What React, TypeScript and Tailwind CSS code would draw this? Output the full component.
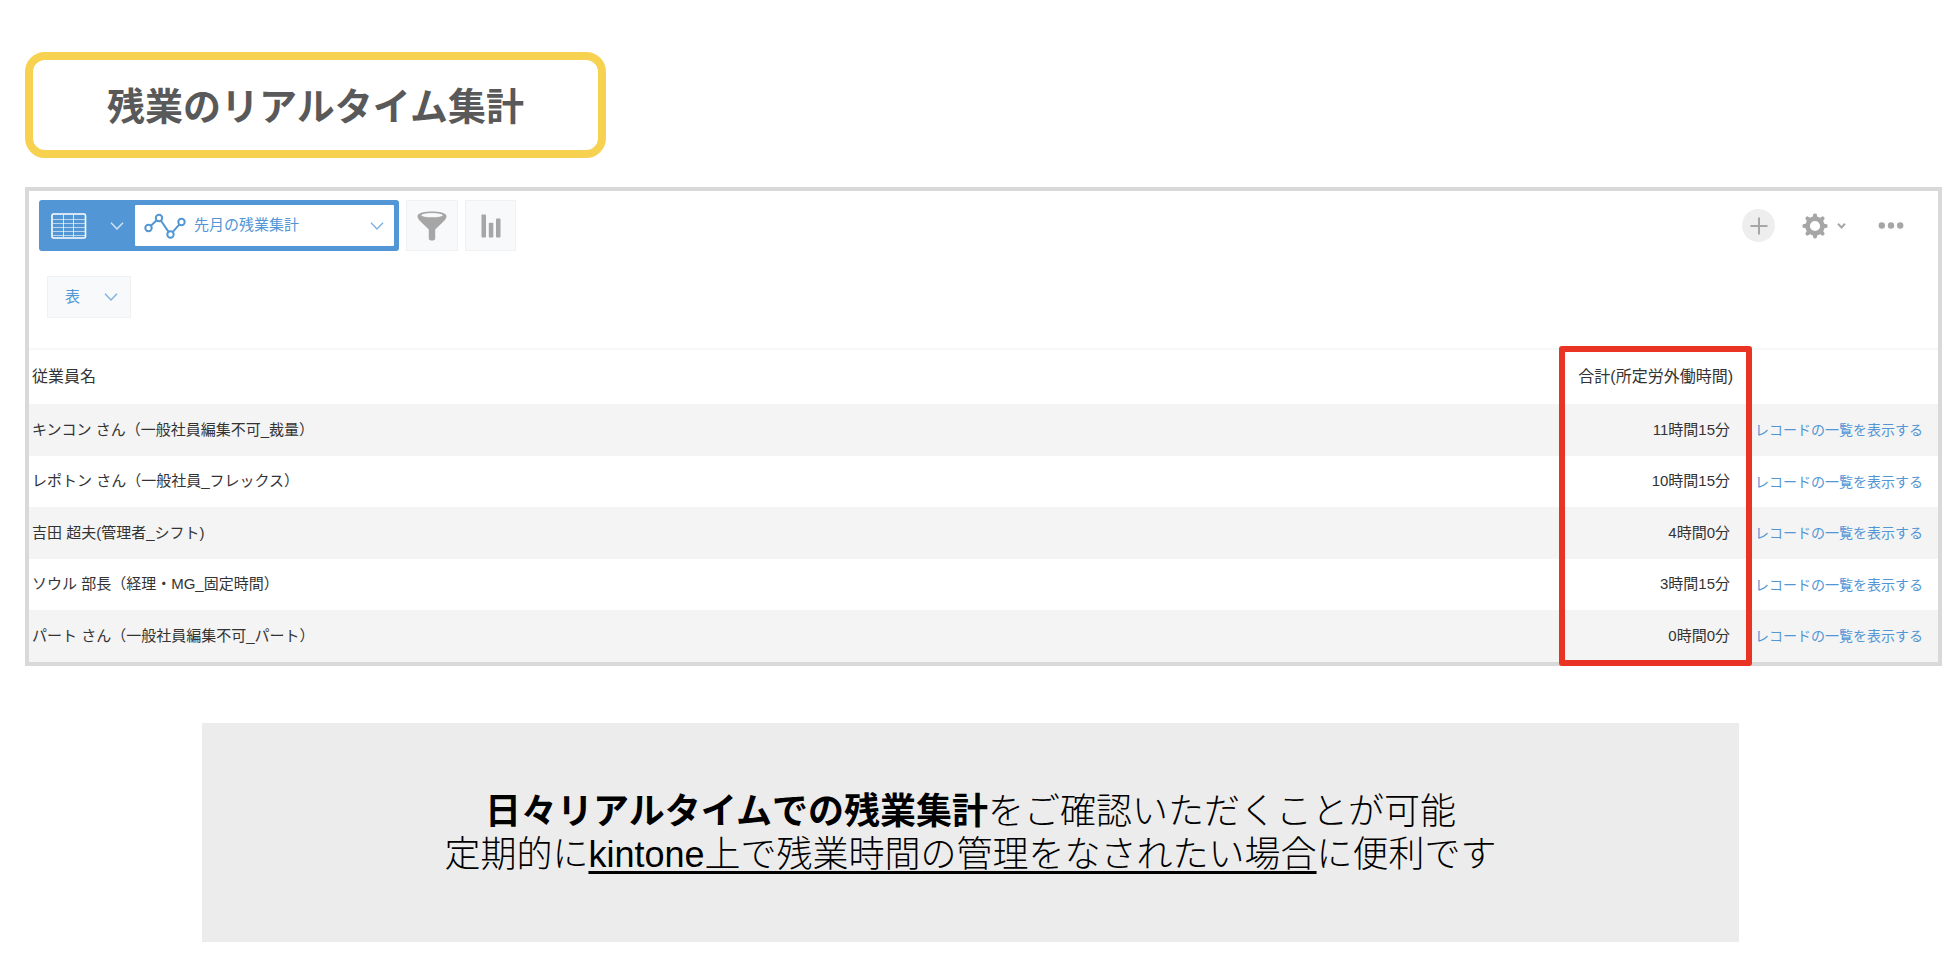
import React, { useState } from 'react';

interface OvertimeRow {
  name: string;
  total: string;
}

const ROWS: OvertimeRow[] = [
  { name: 'キンコン さん（一般社員編集不可_裁量）', total: '11時間15分' },
  { name: 'レポトン さん（一般社員_フレックス）', total: '10時間15分' },
  { name: '吉田 超夫(管理者_シフト)', total: '4時間0分' },
  { name: 'ソウル 部長（経理・MG_固定時間）', total: '3時間15分' },
  { name: 'パート さん（一般社員編集不可_パート）', total: '0時間0分' },
];

const Chevron: React.FC<{ className?: string }> = ({ className }) => (
  <svg className={`h-2 w-3.5 ${className ?? ''}`} viewBox="0 0 14 8" fill="none" stroke="currentColor" strokeWidth="1.4" aria-hidden="true">
    <path d="M1 0.7L7 7L13 0.7" />
  </svg>
);

const GridIcon = () => (
  <svg className="h-[26px] w-9" viewBox="0 0 36 26" fill="none" stroke="#fff" aria-hidden="true">
    <rect x="1" y="1" width="33.5" height="24" rx="1.5" strokeWidth="1.6" />
    <path d="M12.5 2V24M22.5 2V24" strokeWidth="1" opacity="0.75" />
    <path d="M2 6.5H34M2 10.5H34M2 14.5H34M2 18.5H34M2 22.5H34" strokeWidth="1" opacity="0.6" />
  </svg>
);

const LineChartIcon = () => (
  <svg className="h-[26px] w-[42px]" viewBox="0 0 42 26" fill="none" stroke="#5296d5" strokeWidth="2" aria-hidden="true">
    <circle cx="4.5" cy="15" r="3.2" />
    <circle cx="15" cy="5" r="3.2" />
    <circle cx="26.5" cy="21.5" r="3.2" />
    <circle cx="37.5" cy="9" r="3.2" />
    <path d="M6.8 12.7L12.7 7.3M17 7.8L24.6 18.9M28.6 19.1L35.4 11.4" />
  </svg>
);

const FunnelIcon = () => (
  <svg className="h-[30px] w-[30px]" viewBox="0 0 30 30" aria-hidden="true">
    <path
      d="M15 0.5C22 0.5 29.5 1.8 29.5 5.2C29.5 7.5 27.5 9.5 25.5 11.5L18.2 18.5V27.5C18.2 29 17 29.5 15 29.5C13 29.5 11.8 29 11.8 27.5V18.5L4.5 11.5C2.5 9.5 0.5 7.5 0.5 5.2C0.5 1.8 8 0.5 15 0.5Z"
      fill="#a6a6a6"
    />
    <ellipse cx="15" cy="4.2" rx="10.8" ry="2.1" fill="#f7f9fa" />
  </svg>
);

const BarsIcon = () => (
  <svg className="h-6 w-5" viewBox="0 0 20 24" fill="#a6a6a6" aria-hidden="true">
    <rect x="0.5" y="0.5" width="4.5" height="23" rx="0.8" />
    <rect x="7.8" y="8.8" width="4.5" height="14.7" rx="0.8" />
    <rect x="15" y="4.5" width="4.5" height="19" rx="0.8" />
  </svg>
);

const TEETH = [0, 45, 90, 135, 180, 225, 270, 315];

const GearIcon = () => (
  <svg className="h-[26px] w-[26px]" viewBox="0 0 26 26" fill="#a6a6a6" aria-hidden="true">
    <circle cx="13" cy="13" r="7.4" fill="none" stroke="#a6a6a6" strokeWidth="4.6" />
    {TEETH.map(deg => (
      <path key={deg} d="M10.6 4.5L11.3 1.2Q11.5 0.4 13 0.4Q14.5 0.4 14.7 1.2L15.4 4.5Z" transform={`rotate(${deg} 13 13)`} />
    ))}
  </svg>
);

const Toolbar: React.FC = () => {
  const [view, setView] = useState('先月の残業集計');

  return (
    <div className="flex items-center justify-between pr-[34px] pl-2.5">
      <div className="flex gap-[7px]">
        <div className="flex h-[51px] w-[360px] items-stretch rounded-[3px] bg-[#5296d5] py-[5px] pr-[5px]">
          <button type="button" aria-label="表示形式" className="flex w-24 shrink-0 items-center gap-[23px] pl-3 text-[#d3e5f5]">
            <GridIcon />
            <Chevron />
          </button>
          <label className="relative flex flex-1 items-center gap-2 rounded-[1px] bg-white pl-[9px]">
            <LineChartIcon />
            <select
              aria-label="グラフ"
              value={view}
              onChange={e => setView(e.target.value)}
              className="h-full flex-1 appearance-none bg-transparent text-[15px] text-[#5296d5] outline-none"
            >
              <option>先月の残業集計</option>
            </select>
            <Chevron className="pointer-events-none absolute right-2.5 text-[#7fb2e0]" />
          </label>
        </div>
        <button type="button" aria-label="絞り込む" className="flex w-[52px] items-center justify-center border border-[#f0f1f2] bg-[#f7f9fa]">
          <FunnelIcon />
        </button>
        <button type="button" aria-label="グラフを作成" className="flex w-[51px] items-center justify-center border border-[#f0f1f2] bg-[#f7f9fa]">
          <BarsIcon />
        </button>
      </div>

      <div className="flex items-center text-[#a6a6a6]">
        <button type="button" aria-label="追加" className="flex size-[33px] items-center justify-center rounded-full bg-[#eee]">
          <svg className="size-[18px]" viewBox="0 0 18 18" stroke="currentColor" strokeWidth="2" aria-hidden="true">
            <path d="M9 0.5V17.5M0.5 9H17.5" />
          </svg>
        </button>
        <button type="button" aria-label="設定" className="ml-[27px] flex items-center gap-[9px]">
          <GearIcon />
          <svg className="h-1.5 w-[9px]" viewBox="0 0 9 6" fill="none" stroke="currentColor" strokeWidth="2" aria-hidden="true">
            <path d="M1 0.8L4.5 4.5L8 0.8" />
          </svg>
        </button>
        <button type="button" aria-label="その他" className="ml-8">
          <svg className="h-[7px] w-[26px]" viewBox="0 0 26 7" fill="currentColor" aria-hidden="true">
            <circle cx="3.8" cy="3.5" r="3.2" />
            <circle cx="13" cy="3.5" r="3.2" />
            <circle cx="22.2" cy="3.5" r="3.2" />
          </svg>
        </button>
      </div>
    </div>
  );
};

const OvertimeTable: React.FC = () => (
  <div className="relative text-[15px] text-[#333]">
    <table className="w-full table-fixed border-collapse">
      <colgroup>
        <col />
        <col className="w-[177px]" />
        <col className="w-[193px]" />
      </colgroup>
      <thead>
        <tr className="h-14 text-base shadow-[inset_0_2px_0_#f7f7f7]">
          <th scope="col" className="pt-0.5 pl-[3px] text-left font-normal">従業員名</th>
          <th scope="col" className="pt-0.5 pr-3 text-right font-normal whitespace-nowrap">合計(所定労外働時間)</th>
          <td />
        </tr>
      </thead>
      <tbody>
        {ROWS.map(row => (
          <tr key={row.name} className="odd:h-[52px] odd:bg-[#f4f4f4] even:h-[51px]">
            <td className="pl-[3px]">{row.name}</td>
            <td className="pr-[15px] text-right">{row.total}</td>
            <td className="pl-2.5 text-sm whitespace-nowrap">
              <a href="#records" className="text-[#5296d5]">レコードの一覧を表示する</a>
            </td>
          </tr>
        ))}
      </tbody>
    </table>
    {/* highlight over the total column */}
    <div className="pointer-events-none absolute -top-0.5 right-[186px] -bottom-1 w-[193px] rounded-[3px] border-6 border-[#e93323]" />
  </div>
);

export default function App() {
  const [display, setDisplay] = useState('表');

  return (
    <main
      lang="ja"
      className="bg-white pt-[52px] pb-4 pl-[25px] font-['Liberation_Sans','Noto_Sans_CJK_JP',sans-serif] text-black"
    >
      <h1 className="flex h-[106px] w-[581px] items-center justify-center rounded-[20px] border-8 border-[#f7d150] pt-1 text-[38px] font-bold text-[#595959]">
        残業のリアルタイム集計
      </h1>

      <section className="mt-[29px] mr-3.5 border-4 border-[#d9d9d9] pt-[9px]">
        <Toolbar />
        <label className="relative mt-[25px] mb-[30px] ml-[18px] flex h-[42px] w-[84px] items-center border border-[#f0f1f2] bg-[#f7f9fa]">
          <select
            aria-label="表示方法"
            value={display}
            onChange={e => setDisplay(e.target.value)}
            className="h-full w-full appearance-none bg-transparent pl-[17px] text-[15px] text-[#5296d5] outline-none"
          >
            <option>表</option>
          </select>
          <Chevron className="pointer-events-none absolute right-3 text-[#7fb2e0]" />
        </label>
        <OvertimeTable />
      </section>

      <section className="mt-[57px] mr-[217px] ml-[177px] flex h-[219px] items-center justify-center bg-[#ececec] text-center text-[36px] leading-[43px] font-light">
        <p>
          <strong className="font-bold">日々リアルタイムでの残業集計</strong>をご確認いただくことが可能
          <br />
          定期的に
          <span className="underline decoration-3 underline-offset-4 [text-decoration-skip-ink:none]">kintone上で残業時間の管理をなされたい場合</span>
          に便利です
        </p>
      </section>
    </main>
  );
}
